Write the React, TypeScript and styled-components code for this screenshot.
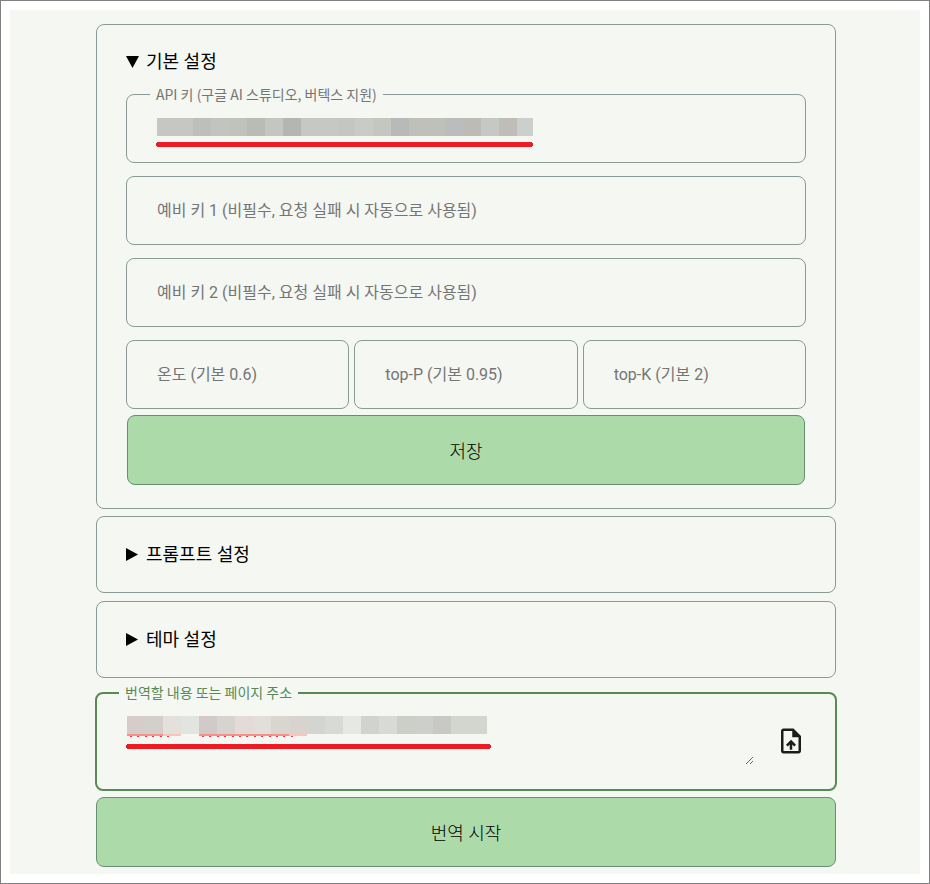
import React, { useState } from "react";
import styled, { createGlobalStyle, css } from "styled-components";

const GlobalStyle = createGlobalStyle`
  *, *::before, *::after { box-sizing: border-box; }
  body {
    margin: 0;
    background: #ffffff;
    color: #000000;
    font-family: Roboto, "Noto Sans CJK KR", sans-serif;
  }
  button, input, textarea { font: inherit; color: inherit; }
`;

const Frame = styled.div`
  min-height: 100vh;
  padding: 9px;
  border: 1px solid #808080;
  display: flex;
`;

const Page = styled.main`
  flex: 1;
  min-width: 0;
  padding: 14px 84px 7px 86px;
  background: #f5f7f2;
`;

const Stack = styled.form`
  display: flex;
  flex-direction: column;
  gap: 7px;
`;

const Card = styled.details`
  padding: 0 29px;
  border: 1px solid #8a9a97;
  border-radius: 8px;

  & + & + & { margin-top: 1px; }
`;

const CardTitle = styled.summary`
  display: flex;
  align-items: center;
  gap: 7px;
  height: 75px;
  font-size: 18px;
  line-height: 24px;
  list-style: none;
  cursor: pointer;

  &::-webkit-details-marker { display: none; }
  details[open] > & { height: 62px; padding-top: 12px; }
`;

const Marker = styled.svg`
  flex: none;
  width: 13px;
  height: 13px;

  details[open] > summary > & { transform: rotate(90deg); }
`;

const CardBody = styled.div`
  display: flex;
  flex-direction: column;
  gap: 13px;
  padding-bottom: 23px;
`;

const FieldSet = styled.fieldset<{ $active?: boolean }>`
  position: relative;
  display: block;
  min-width: 0;
  margin: 0;
  padding: 0 23px;
  border: 1px solid #8a9a97;
  border-radius: 8px;
  color: #757575;
  ${({ $active }) =>
    $active &&
    css`
      margin: 0 -1px -1px;
      padding: 0 22px;
      border: 2px solid #578a55;
      color: #578a55;
    `}
`;

const Legend = styled.legend`
  padding: 0 6px;
  font-family: "Noto Sans CJK KR", sans-serif;
  font-size: 14px;
  line-height: 15px;
`;

const KeyInput = styled.input`
  display: block;
  width: 100%;
  height: 60px;
  padding: 0 7px;
  border: 0;
  background: transparent;
  outline: none;
`;

const TextField = styled.input`
  display: block;
  width: 100%;
  min-width: 0;
  height: 69px;
  padding: 0 30px;
  border: 1px solid #8a9a97;
  border-radius: 8px;
  background: transparent;
  font-size: 16px;

  &::placeholder { color: #757575; opacity: 1; }
`;

const FieldRow = styled.div`
  display: grid;
  grid-template-columns: repeat(3, minmax(0, 1fr));
  gap: 5px;
`;

const Button = styled.button<{ $inset?: boolean }>`
  height: 70px;
  margin: ${({ $inset }) => ($inset ? "-7px 1px 0" : "0")};
  border: 1px solid #678f73;
  border-radius: 8px;
  background: #addaa9;
  font-size: 18px;
  font-weight: 300;
  cursor: pointer;
`;

const Composer = styled.div`
  display: flex;
  align-items: center;
  height: 89px;
  padding-bottom: 8px;
`;

const SourceText = styled.textarea`
  flex: 1;
  min-width: 0;
  height: 48px;
  margin: 0 22px 0 7px;
  padding: 0;
  border: 0;
  background: transparent;
  outline: none;
  resize: both;
`;

const IconButton = styled.button`
  flex: none;
  width: 30px;
  height: 30px;
  margin-right: 7px;
  padding: 0;
  border: 0;
  background: transparent;
  color: #1c1c1c;
  cursor: pointer;

  & > svg { display: block; }
`;

const MaskLayer = styled.svg`
  position: absolute;
  left: 29px;
  top: 16px;
  pointer-events: none;
`;

const keyMask = [
  "#c6c6c2", "#c6c7c2", "#bcbfbc", "#c2c4bf", "#c0c2bc", "#b9bbb5", "#c4c6c1",
  "#b4b6b3", "#c6c8c5", "#c6c8c5", "#c5c6c1", "#c9cbc6", "#c4c6c0", "#b8bab8",
  "#bfc0b9", "#bfc0b9", "#babdbb", "#bdbbb6", "#c6c8c5", "#c0bdb9", "#cbd0cc",
];

const sourceMask = [
  "#d6cdcb", "#d3cfcb", "#e4e1dc", "#e1e4df", "#d2cac8", "#d6d4cf", "#e4dbd9",
  "#e2deda", "#d9d5cf", "#d8d3cf", "#d2d5d0", "#d7dad5", "#e6e8e3", "#d1d4ce",
  "#d8dad5", "#cccec8", "#cdcfca", "#c8c9c4", "#d3d5cf", "#d3d6cf",
];

interface MaskProps {
  colors: string[];
  width: number;
  lineWidth: number;
  lineTop: number;
  spelling?: boolean;
}

function Mask({ colors, width, lineWidth, lineTop, spelling }: MaskProps) {
  return (
    <MaskLayer width={lineWidth} height={lineTop + 5} shapeRendering="crispEdges" aria-hidden="true">
      {colors.map((fill, i) => (
        <rect key={i} x={1 + i * 18} y="0" width={Math.min(18, width - i * 18)} height="18" fill={fill} />
      ))}
      {spelling && (
        <g>
          <path d="M1 18h36v2h-36z M73 18h90v2h-90z" fill="#f98f8b" />
          <path d="M37 18h18v2h-18z M163 18h18v2h-18z" fill="#f9c3c0" />
          <path
            d="M4 20.5h40 M76 20.5h92"
            stroke="#f0343a"
            strokeDasharray="2 5.4"
          />
        </g>
      )}
      <path d={`M1 ${lineTop}H${lineWidth - 1}v1h1v3h-1v1H1v-1H0v-3h1z`} fill="#ed1c24" />
    </MaskLayer>
  );
}

function Arrow() {
  return (
    <Marker viewBox="0 0 13 13" aria-hidden="true">
      <path d="M0 0L12 6.5L0 13z" fill="#000" />
    </Marker>
  );
}

export default function App() {
  const [apiKey, setApiKey] = useState("");
  const [source, setSource] = useState("");

  return (
    <>
      <GlobalStyle />
      <Frame>
        <Page>
          <Stack onSubmit={(e) => e.preventDefault()}>
            <Card open>
              <CardTitle>
                <Arrow />
                기본 설정
              </CardTitle>
              <CardBody>
                <FieldSet>
                  <Legend>
                    <label htmlFor="api-key">API 키 (구글 AI 스튜디오, 버텍스 지원)</label>
                  </Legend>
                  <KeyInput id="api-key" value={apiKey} onChange={(e) => setApiKey(e.target.value)} />
                  {!apiKey && <Mask colors={keyMask} width={376} lineWidth={377} lineTop={24} />}
                </FieldSet>
                <TextField
                  aria-label="예비 키 1"
                  placeholder="예비 키 1 (비필수, 요청 실패 시 자동으로 사용됨)"
                />
                <TextField
                  aria-label="예비 키 2"
                  placeholder="예비 키 2 (비필수, 요청 실패 시 자동으로 사용됨)"
                />
                <FieldRow>
                  <TextField aria-label="온도" placeholder="온도 (기본 0.6)" />
                  <TextField aria-label="top-P" placeholder="top-P (기본 0.95)" />
                  <TextField aria-label="top-K" placeholder="top-K (기본 2)" />
                </FieldRow>
                <Button type="button" $inset>저장</Button>
              </CardBody>
            </Card>
            <Card>
              <CardTitle>
                <Arrow />
                프롬프트 설정
              </CardTitle>
            </Card>
            <Card>
              <CardTitle>
                <Arrow />
                테마 설정
              </CardTitle>
            </Card>
            <FieldSet $active>
              <Legend>
                <label htmlFor="source">번역할 내용 또는 페이지 주소</label>
              </Legend>
              <Composer>
                <SourceText id="source" value={source} onChange={(e) => setSource(e.target.value)} />
                <IconButton type="button" aria-label="파일 업로드">
                  <svg width="30" height="30" viewBox="0 0 24 24" fill="currentColor" aria-hidden="true">
                    <path d="M14 2H6c-1.1 0-1.99.9-1.99 2L4 20c0 1.1.89 2 1.99 2H18c1.1 0 2-.9 2-2V8l-6-6zm4 18H6V4h7v5h5v11zM8 15.01l1.41 1.41L11 14.84V19h2v-4.16l1.59 1.59L16 15.01 12.01 11 8 15.01z" />
                  </svg>
                </IconButton>
              </Composer>
              {!source && <Mask colors={sourceMask} width={360} lineWidth={365} lineTop={28} spelling />}
            </FieldSet>
            <Button type="submit">번역 시작</Button>
          </Stack>
        </Page>
      </Frame>
    </>
  );
}
